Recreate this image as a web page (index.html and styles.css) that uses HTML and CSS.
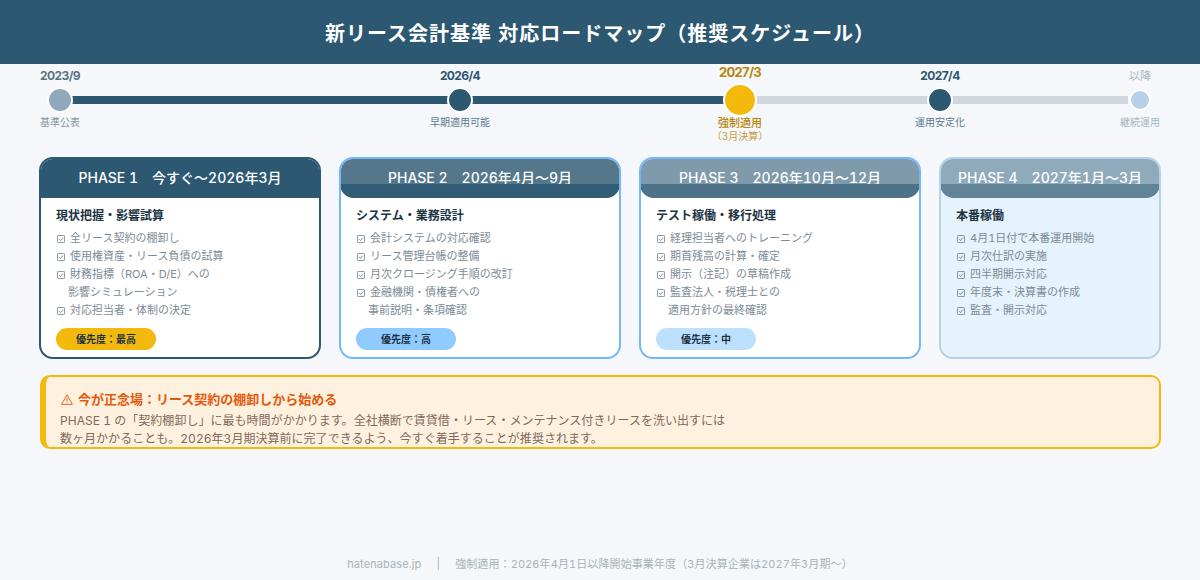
FILE: index.html
```html
<!DOCTYPE html>
<html lang="ja">
<head>
<meta charset="utf-8">
<title>新リース会計基準 対応ロードマップ</title>
<link rel="stylesheet" href="styles.css">
</head>
<body>
<svg class="defs" aria-hidden="true"><symbol id="chk" viewBox="0 0 8 8"><rect x=".4" y=".4" width="7.2" height="7.2" rx="1" fill="none" stroke="#5f7482" stroke-width=".8"/><path d="M2 4.1 3.5 5.6 6 2.5" fill="none" stroke="#5f7482" stroke-width=".8"/></symbol></svg>
<header class="top"><h1>新リース会計基準 対応ロードマップ（推奨スケジュール）</h1></header>
<section class="timeline">
  <div class="stop past"><div class="date">2023/9</div><div class="dotrow"><span class="dot"></span></div><div class="label">基準公表</div></div>
  <div class="seg done"></div>
  <div class="stop early"><div class="date">2026/4</div><div class="dotrow"><span class="dot"></span></div><div class="label">早期適用可能</div></div>
  <div class="seg done"></div>
  <div class="stop must"><div class="date">2027/3</div><div class="dotrow"><span class="dot"></span></div><div class="label">強制適用</div><div class="sublabel">（3月決算）</div></div>
  <div class="seg"></div>
  <div class="stop early"><div class="date">2027/4</div><div class="dotrow"><span class="dot"></span></div><div class="label">運用安定化</div></div>
  <div class="seg"></div>
  <div class="stop later"><div class="date">以降</div><div class="dotrow"><span class="dot"></span></div><div class="label">継続運用</div></div>
</section>
<section class="cards">
  <article class="card p1">
    <div class="head"><span>PHASE 1　今すぐ～2026年3月</span></div>
    <div class="body">
      <h2>現状把握・影響試算</h2>
      <ul>
        <li><svg class="chk"><use href="#chk"/></svg>全リース契約の棚卸し</li>
        <li><svg class="chk"><use href="#chk"/></svg>使用権資産・リース負債の試算</li>
        <li><svg class="chk"><use href="#chk"/></svg>財務指標（ROA・D/E）への</li>
        <li class="cont">影響シミュレーション</li>
        <li><svg class="chk"><use href="#chk"/></svg>対応担当者・体制の決定</li>
      </ul>
      <div class="pill">優先度：最高</div>
    </div>
  </article>
  <article class="card p2">
    <div class="head"><span>PHASE 2　2026年4月～9月</span></div>
    <div class="body">
      <h2>システム・業務設計</h2>
      <ul>
        <li><svg class="chk"><use href="#chk"/></svg>会計システムの対応確認</li>
        <li><svg class="chk"><use href="#chk"/></svg>リース管理台帳の整備</li>
        <li><svg class="chk"><use href="#chk"/></svg>月次クロージング手順の改訂</li>
        <li><svg class="chk"><use href="#chk"/></svg>金融機関・債権者への</li>
        <li class="cont">事前説明・条項確認</li>
      </ul>
      <div class="pill">優先度：高</div>
    </div>
  </article>
  <article class="card p3">
    <div class="head"><span>PHASE 3　2026年10月～12月</span></div>
    <div class="body">
      <h2>テスト稼働・移行処理</h2>
      <ul>
        <li><svg class="chk"><use href="#chk"/></svg>経理担当者へのトレーニング</li>
        <li><svg class="chk"><use href="#chk"/></svg>期首残高の計算・確定</li>
        <li><svg class="chk"><use href="#chk"/></svg>開示（注記）の草稿作成</li>
        <li><svg class="chk"><use href="#chk"/></svg>監査法人・税理士との</li>
        <li class="cont">適用方針の最終確認</li>
      </ul>
      <div class="pill">優先度：中</div>
    </div>
  </article>
  <article class="card p4">
    <div class="head"><span>PHASE 4　2027年1月～3月</span></div>
    <div class="body">
      <h2>本番稼働</h2>
      <ul>
        <li><svg class="chk"><use href="#chk"/></svg>4月1日付で本番運用開始</li>
        <li><svg class="chk"><use href="#chk"/></svg>月次仕訳の実施</li>
        <li><svg class="chk"><use href="#chk"/></svg>四半期開示対応</li>
        <li><svg class="chk"><use href="#chk"/></svg>年度末・決算書の作成</li>
        <li><svg class="chk"><use href="#chk"/></svg>監査・開示対応</li>
      </ul>
    </div>
  </article>
</section>
<section class="notice">
  <h3><svg class="warn" viewBox="0 0 12 11" width="12" height="11" aria-hidden="true"><path d="M6 .8 11.4 10.4H.6Z" fill="none" stroke="#e5590d" stroke-width=".9" stroke-linejoin="round"/><path d="M6 4v3.6M6 8.4v.9" fill="none" stroke="#e5590d" stroke-width=".9"/></svg>今が正念場：リース契約の棚卸しから始める</h3>
  <p>PHASE 1 の「契約棚卸し」に最も時間がかかります。全社横断で賃貸借・リース・メンテナンス付きリースを洗い出すには<br>数ヶ月かかることも。2026年3月期決算前に完了できるよう、今すぐ着手することが推奨されます。</p>
</section>
<footer class="foot">hatenabase.jp<span class="sep">|</span>強制適用：2026年4月1日以降開始事業年度（3月決算企業は2027年3月期～）</footer>
</body>
</html>
```
FILE: styles.css
```css
* { box-sizing: border-box; }
html, body { margin: 0; padding: 0; }
body {
  width: 1200px;
  height: 580px;
  overflow: hidden;
  background: #f5f7fb;
  font-family: Inter, "Noto Sans CJK JP", sans-serif;
  font-variant-numeric: tabular-nums;
  display: flex;
  flex-direction: column;
  position: relative;
}
.defs { position: absolute; width: 0; height: 0; }
.top {
  height: 64px;
  flex: none;
  background: #2c5872;
  display: flex;
  align-items: center;
  justify-content: center;
}
.top h1 {
  margin: 0;
  color: #fff;
  font-size: 20px;
  font-weight: 700;
  letter-spacing: 1px;
}
.timeline {
  display: flex;
  flex: none;
  padding: 0 40px;
  height: 93px;
}
.stop {
  width: 40px;
  flex: none;
  display: flex;
  flex-direction: column;
  align-items: center;
  white-space: nowrap;
  position: relative;
  z-index: 1;
}
.date {
  height: 19px;
  margin-bottom: 3px;
  display: flex;
  align-items: flex-end;
  font-size: 12px;
  font-weight: 700;
  font-variant-numeric: normal;
  letter-spacing: -0.6px;
  color: #2c5872;
}
.dotrow { height: 28px; display: flex; align-items: center; justify-content: center; }
.dot {
  display: block;
  width: 26px;
  height: 26px;
  border-radius: 50%;
  border: 2px solid #fff;
  background: #2c5872;
}
.label { font-size: 10px; line-height: 14px; color: #5a7a8f; margin-top: 1px; }
.sublabel { font-size: 10px; line-height: 13px; color: #c89a3c; margin-top: 0; }
.past .date { color: #5a7384; }
.past .dot { background: #8fa8bc; }
.past .label { color: #83939f; }
.must .date { color: #b8860b; font-size: 13px; height: 16px; margin-bottom: 0; letter-spacing: -0.7px; }
.must .dotrow { height: 40px; }
.must .dot { width: 34px; height: 34px; background: #f4b90d; }
.must .label { color: #b8860b; font-size: 11px; margin-top: -4px; font-weight: 500; }
.later .date { color: #a9b6c0; font-weight: 400; font-size: 11px; letter-spacing: 0; }
.later .dot { width: 22px; height: 22px; background: #b5d2ea; }
.later .label { color: #a9b6c0; }
.seg {
  flex: none;
  height: 8px;
  margin: 32px -8px 0;
  background: #d0d7de;
}
.seg.done { background: #2c5872; }
.seg:nth-child(2) { width: 376px; }
.seg:nth-child(4) { width: 256px; }
.seg:nth-child(6) { width: 176px; }
.seg:nth-child(8) { width: 176px; }
.cards {
  display: grid;
  grid-template-columns: 282px 282px 282px 222px;
  column-gap: 18px;
  padding: 0 39px;
  flex: none;
  height: 202px;
}
.card {
  border: 2px solid #74b8f8;
  border-radius: 14px;
  background: #fff;
  overflow: hidden;
  display: flex;
  flex-direction: column;
}
.head {
  height: 40px;
  flex: none;
  margin: -1px -1px 0;
  position: relative;
  color: #fff;
  font-size: 14px;
  font-weight: 500;
  text-align: center;
  line-height: 40px;
  overflow: hidden;
  border-radius: 14px;
}
.head::after {
  content: "";
  position: absolute;
  left: 0;
  right: 0;
  bottom: 0;
  height: 14px;
  border-radius: 0 0 14px 14px;
  background: #335d76;
}
.body { padding: 9px 14px 0 15px; flex: 1; display: flex; flex-direction: column; }
.body h2 {
  margin: 0;
  font-size: 12px;
  font-weight: 700;
  line-height: 18px;
  color: #1c3344;
}
.body ul { margin: 4px 0 0; padding: 0; list-style: none; }
.body li {
  font-size: 11px;
  line-height: 18px;
  color: #7d8b96;
  white-space: nowrap;
}
.chk {
  width: 8px;
  height: 8px;
  margin: 0 5px 0 1px;
  vertical-align: -0.5px;
}
.body li.cont { padding-left: 12px; }
.pill {
  margin-top: 9px;
  width: 100px;
  height: 22px;
  border-radius: 11px;
  font-size: 10px;
  font-weight: 700;
  line-height: 22px;
  text-align: center;
  color: #1c3344;
}
.p1 { border-color: #2c5872; }
.p1 .head { background: #2c5872; border-radius: 0; }
.p1 .head::after { display: none; }
.p1 .pill { background: #f4b90d; }
.p2 .head { background: #54778c; }
.p2 .pill { background: #90cbff; }
.p3 .head { background: #7e9aab; }
.p3 .head::after { background: #4e7287; }
.p3 .pill { background: #bde0fe; }
.p4 { border-color: #b5d2ea; background: #e6f2fc; }
.p4 .head { background: #8faabb; }
.p4 .head::after { background: #628498; }
.notice {
  margin: 16px 39px 0 40px;
  height: 74px;
  flex: none;
  border: 2px solid #f4b90d;
  border-left-width: 6px;
  border-radius: 10px;
  background: #fff1df;
  padding: 10px 14px 0;
  overflow: hidden;
}
.notice h3 {
  margin: 0;
  font-size: 13px;
  font-weight: 700;
  line-height: 24px;
  color: #e5590d;
  display: flex;
  align-items: center;
}
.warn { margin: 0 5px 0 1px; flex: none; }
.notice p {
  margin: 1px 0 0;
  font-size: 12px;
  line-height: 18px;
  color: #80695c;
  letter-spacing: 0.03px;
}
.foot {
  position: absolute;
  left: 0;
  right: 0;
  bottom: 8px;
  text-align: center;
  font-size: 11px;
  line-height: 16px;
  color: #abb2b8;
  letter-spacing: 0.1px;
}
.sep { margin: 0 15px; }
```
